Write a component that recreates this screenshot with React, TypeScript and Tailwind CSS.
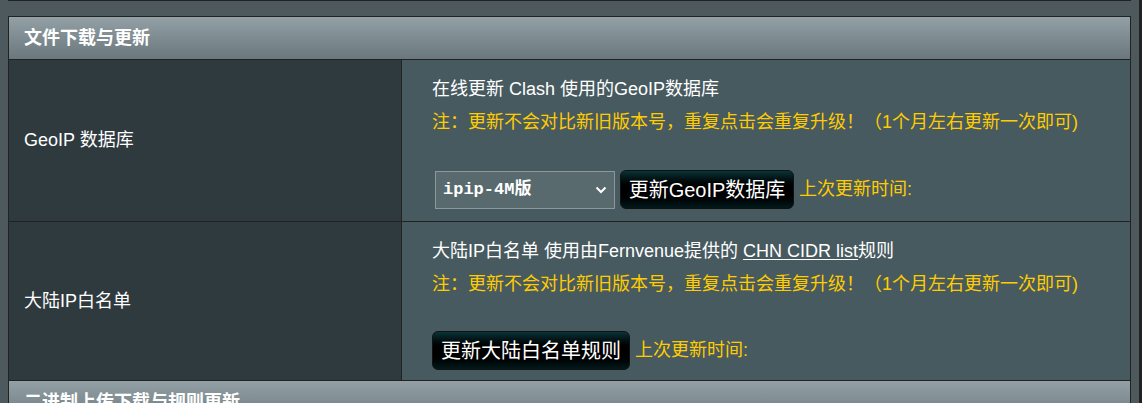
import React from 'react';

const font = { fontFamily: '"Liberation Sans", "Noto Sans CJK SC", sans-serif' };

const SectionHeader = ({ title }: { title: string }) => (
    <div className="h-[42px] flex items-center pl-[15px] bg-linear-to-b from-[#93a1a6] to-[#6a777c] text-white font-bold text-[18px]">
        {title}
    </div>
);

const Note = () => (
    <div className="h-6 leading-6 mt-[9px] text-[#ffcc00]">
        注：更新不会对比新旧版本号，重复点击会重复升级！（1个月左右更新一次即可)
    </div>
);

const UpdateButton = ({ label, width }: { label: string; width: string }) => (
    <button
        className={`${width} h-[39px] rounded-md border border-[#111] bg-linear-to-b from-[#0b3438] via-[#000] to-[#021a1c] text-white text-[20px] leading-none`}
        style={font}
    >
        {label}
    </button>
);

const LastUpdated = () => <span className="ml-[5px] text-[#ffcc00]">上次更新时间:</span>;

interface RowProps {
    label: string;
    height: string;
    children: React.ReactNode;
}

const Row = ({ label, height, children }: RowProps) => (
    <div className={`flex ${height} border-b border-[#222]`}>
        <div className="w-[393px] shrink-0 bg-[#2f3a3f] border-r border-[#222] flex items-center pl-[15px] text-white">
            {label}
        </div>
        <div className="flex-1 bg-[#475a5f] pl-[30px] pt-[17px] flex flex-col">{children}</div>
    </div>
);

export default function App() {
    return (
        <div className="w-[1142px] h-[403px] overflow-hidden bg-[#4d595d] flex text-[18px]" style={font}>
            <div className="pl-2 pr-2 w-[1139px]">
                <div className="h-px bg-[#222]" />
                <div className="h-[15px]" />
                <div className="border border-[#222] border-b-0">
                    <div className="border-b border-[#222]">
                        <SectionHeader title="文件下载与更新" />
                    </div>

                    <Row label="GeoIP 数据库" height="h-[162px]">
                        <div className="h-6 leading-6 text-white">在线更新 Clash 使用的GeoIP数据库</div>
                        <Note />
                        <div className="mt-[36px] h-[39px] flex items-center">
                            <div className="ml-[3px] w-[180px] h-[38px] mt-[1px] border border-[#8c979b] bg-[#596a6f] flex items-center justify-between pl-[7px] pr-[7px]">
                                <span
                                    className="text-white text-[17px] font-bold"
                                    style={{ fontFamily: '"Liberation Mono", "Noto Sans CJK SC", monospace' }}
                                >
                                    ipip-4M版
                                </span>
                                <svg width="12" height="8" viewBox="0 0 12 8" fill="none">
                                    <path d="M1.5 1.5 6 6l4.5-4.5" stroke="#fff" strokeWidth="2" />
                                </svg>
                            </div>
                            <div className="ml-[5px]">
                                <UpdateButton label="更新GeoIP数据库" width="w-[174px]" />
                            </div>
                            <LastUpdated />
                        </div>
                    </Row>

                    <Row label="大陆IP白名单" height="h-[159px]">
                        <div className="h-6 leading-6 text-white">
                            大陆IP白名单 使用由Fernvenue提供的 <span className="underline underline-offset-2">CHN CIDR list</span>规则
                        </div>
                        <Note />
                        <div className="mt-[35px] h-[39px] flex items-center">
                            <UpdateButton label="更新大陆白名单规则" width="w-[198px]" />
                            <LastUpdated />
                        </div>
                    </Row>

                    <SectionHeader title="二进制上传下载与规则更新" />
                </div>
            </div>
            <div className="w-[3px] bg-[#222]" />
        </div>
    );
}
